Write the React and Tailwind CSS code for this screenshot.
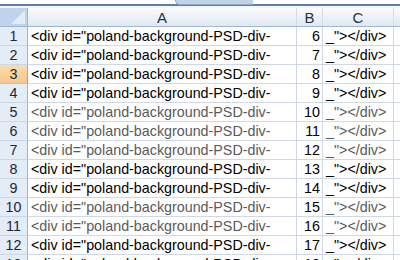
import React from 'react';

const gray = [5, 6, 7, 10, 11];
const rows = Array.from({ length: 13 }, (_, i) => i + 1);

export default function App() {
  return (
    <div className="w-[400px] h-[260px] overflow-hidden bg-white text-[14.3px] leading-none" style={{ fontFamily: '"Liberation Sans", Arial, sans-serif' }}>
      {/* formula bar edge */}
      <div className="relative h-[8px] bg-[#f4f6f9]">
        <div className="h-[4px] bg-white" />
        <div className="h-[2px] bg-[#5f7fab]" />
        <div className="absolute left-[175px] top-0 w-[78px] h-[5px] rounded-bl-[6px] bg-[#c2d2e6] border-b border-l border-[#8ea8c9]" />
      </div>

      {/* column headers */}
      <div className="flex h-[19px] border-b border-[#9eb6ce] bg-gradient-to-b from-[#fafcfe] to-[#e1e8f1] text-[#27313f] text-[15px]">
        <div className="relative w-[28px] shrink-0 bg-[#c0d3ec] border-r border-[#9eb6ce]">
          <svg className="absolute right-[2px] bottom-[2px]" width="14" height="14" viewBox="0 0 14 14">
            <polygon points="14,0 14,14 0,14" fill="#e3ebf5" />
          </svg>
        </div>
        <div className="w-[269px] shrink-0 flex items-center justify-center border-r border-[#d5dce6]">A</div>
        <div className="w-[26px] shrink-0 flex items-center justify-center border-r border-[#d5dce6]">B</div>
        <div className="w-[71px] shrink-0 flex items-center justify-center border-r border-[#d5dce6]">C</div>
        <div className="flex-1" />
      </div>

      {/* rows */}
      {rows.map((n) => {
        const sel = n === 3;
        const txt = gray.includes(n) ? 'text-[#5a5a5a]' : 'text-black';
        return (
          <div key={n} className="flex h-[19px]">
            <div className={`w-[28px] shrink-0 flex items-center justify-center border-r border-b ${sel ? 'bg-gradient-to-b from-[#fadcae] to-[#f6c88c] border-r-[#f29436] border-b-[#f0b877] text-[#1b2838]' : 'bg-[#e4ecf7] border-r-[#9eb6ce] border-b-[#c9d7ea] text-[#1b2838]'}`}>
              {n}
            </div>
            <div className={`w-[269px] shrink-0 flex items-center pl-[3px] border-r border-b border-[#d0d7e5] whitespace-nowrap overflow-hidden ${txt}`}>
              {'<div id="poland-background-PSD-div-'}
            </div>
            <div className="w-[26px] shrink-0 flex items-center justify-end pr-[2px] border-r border-b border-[#d0d7e5] text-black">
              {n + 5}
            </div>
            <div className={`w-[71px] shrink-0 flex items-center pl-[3px] border-r border-b border-[#d0d7e5] whitespace-nowrap overflow-hidden ${txt}`}>
              {'_"></div>'}
            </div>
            <div className="flex-1 border-b border-[#d0d7e5]" />
          </div>
        );
      })}
    </div>
  );
}
